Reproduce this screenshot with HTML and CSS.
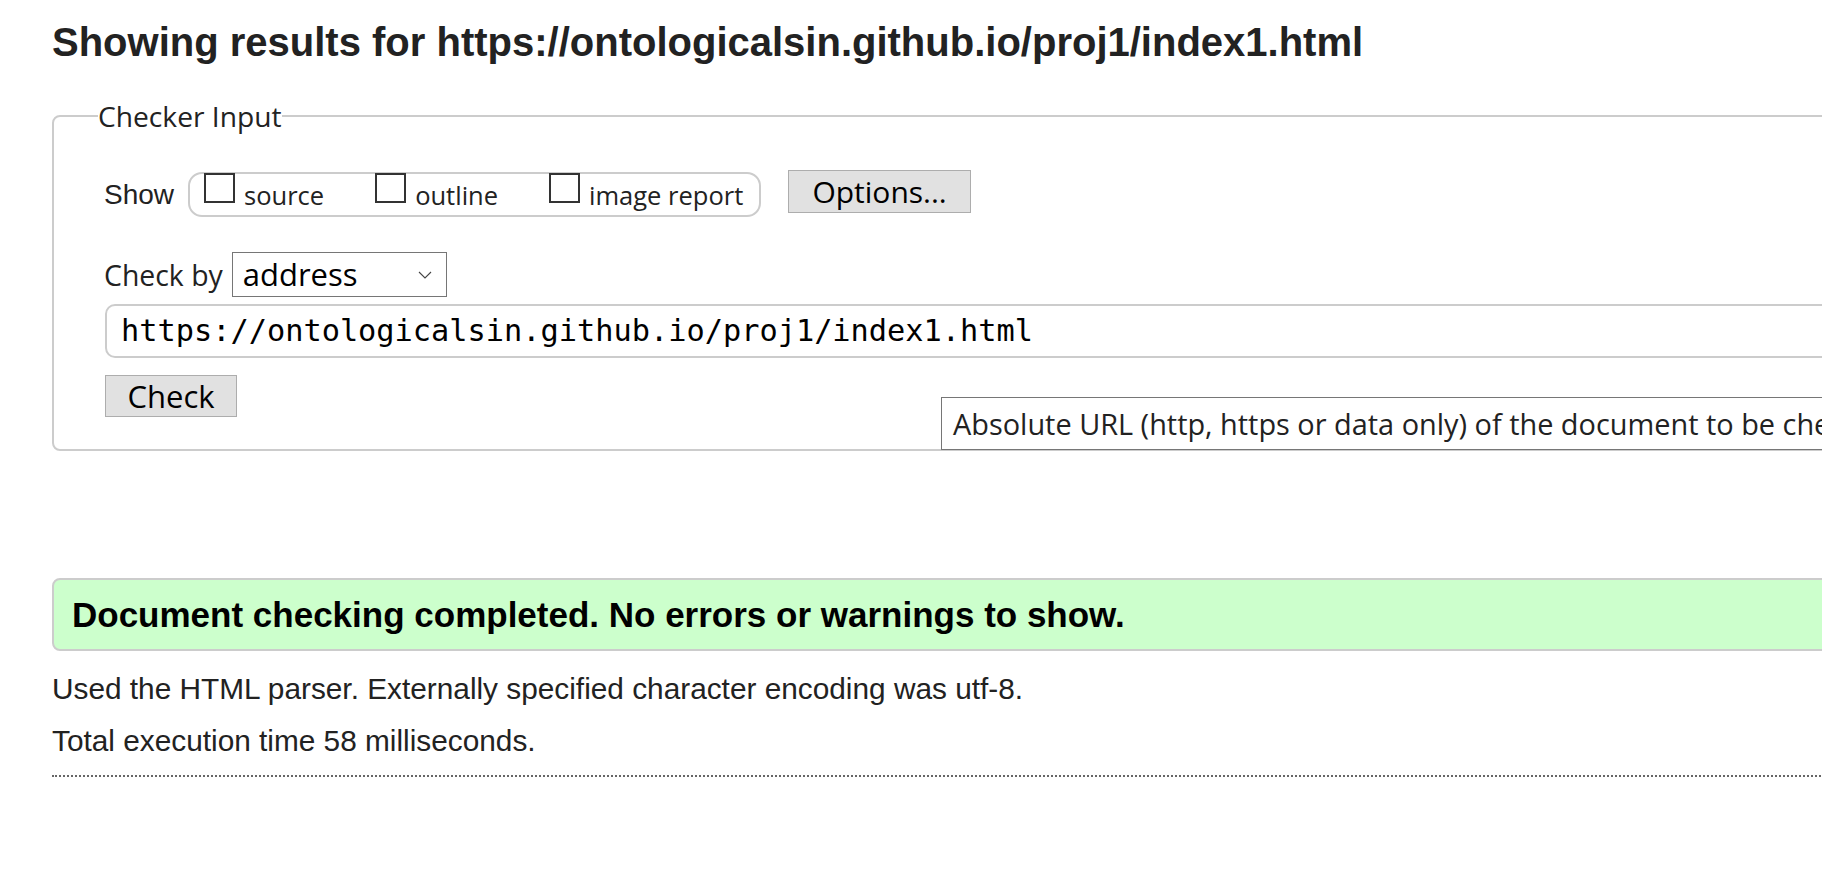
FILE: index.html
```html
<!DOCTYPE html>
<html lang="en">
<head>
<meta charset="utf-8">
<title>Showing results for https://ontologicalsin.github.io/proj1/index1.html</title>
<link rel="stylesheet" href="styles.css">
</head>
<body>
<div class="page">
  <h1 class="title">Showing results for https://ontologicalsin.github.io/proj1/index1.html</h1>
  <form class="checker">
    <fieldset class="checker-input">
      <legend class="legend">Checker Input</legend>
      <div class="show-row">
        <span class="show-label">Show</span>
        <fieldset class="show-options">
          <label class="opt"><span class="box"></span><span class="opt-text">source</span></label>
          <label class="opt"><span class="box"></span><span class="opt-text">outline</span></label>
          <label class="opt"><span class="box"></span><span class="opt-text">image report</span></label>
        </fieldset>
        <button type="button" class="btn btn-options">Options...</button>
      </div>
      <div class="by-row">
        <span class="by-label">Check by</span>
        <div class="select">
          <span class="select-value">address</span>
          <svg class="chevron" width="14" height="8" viewBox="0 0 14 8"><polyline points="1,1 7,7 13,1" fill="none" stroke="#444" stroke-width="1.1"/></svg>
        </div>
      </div>
      <div class="url-input">https://ontologicalsin.github.io/proj1/index1.html</div>
      <div class="check-row">
        <button type="button" class="btn btn-check">Check</button>
      </div>
    </fieldset>
  </form>
  <div class="tooltip">Absolute URL (http, https or data only) of the document to be checked. Tip: you can also just paste the address into the field.</div>
  <div class="success"><span class="success-text">Document checking completed. No errors or warnings to show.</span></div>
  <p class="details">Used the HTML parser. Externally specified character encoding was utf-8.</p>
  <p class="details details-time">Total execution time 58 milliseconds.</p>
  <div class="dotted"></div>
</div>
</body>
</html>
```

FILE: styles.css
```css
html {
  overflow: hidden;
  background: #fff;
}

body {
  margin: 0;
  font-family: "Liberation Sans", Arial, sans-serif;
  color: #222;
}

.page {
  position: relative;
  width: 2400px;
  padding-left: 52px;
  padding-top: 20px;
}

.title {
  margin: 0 0 32px 0;
  font-size: 40px;
  line-height: 45px;
  font-weight: bold;
  color: #222;
}

.checker {
  margin: 0;
}

.checker-input {
  margin: 0;
  padding: 35px 0 32px 51px;
  border: 2px solid #ccc;
  border-radius: 8px;
  min-inline-size: 0;
}

.legend {
  margin-left: -7px;
  padding: 0;
  font-family: "Open Sans", sans-serif;
  font-size: 28.2px;
  line-height: 38px;
  color: #222;
}

.show-row {
  display: flex;
  align-items: flex-start;
  height: 47px;
}

.show-label {
  margin-top: 9px;
  margin-left: -1px;
  font-size: 28px;
  line-height: 32px;
  color: #222;
}

.show-options {
  display: flex;
  align-items: flex-start;
  box-sizing: border-box;
  width: 573px;
  height: 45px;
  margin: 2px 0 0 14px;
  padding: 0 0 0 14px;
  border: 2px solid #ccc;
  border-radius: 14px;
  min-inline-size: 0;
}

.opt {
  display: flex;
  align-items: flex-start;
  margin-right: 51px;
}

.opt:last-child {
  margin-right: 0;
}

.box {
  box-sizing: border-box;
  width: 31px;
  height: 30px;
  margin-top: -1px;
  border: 2px solid #333;
  background: #fff;
}

.opt-text {
  margin: 5px 0 0 9px;
  font-family: "Open Sans", sans-serif;
  font-size: 25.5px;
  line-height: 32px;
  color: #222;
}

.btn {
  box-sizing: border-box;
  padding: 0;
  background: #e1e1e1;
  border: 1px solid #adadad;
  border-radius: 0;
  color: #000;
  font-family: "Open Sans", sans-serif;
}

.btn-options {
  width: 183px;
  height: 43px;
  margin-left: 27px;
  font-size: 30px;
  line-height: 41px;
}

.by-row {
  display: flex;
  align-items: center;
  margin-top: 35px;
  height: 45px;
}

.by-label {
  margin-left: -1px;
  font-family: "Open Sans", sans-serif;
  font-size: 28.4px;
  line-height: 38px;
  color: #222;
}

.select {
  box-sizing: border-box;
  display: flex;
  align-items: center;
  justify-content: space-between;
  width: 215px;
  height: 45px;
  margin-left: 9px;
  padding: 0 14px 0 10px;
  border: 1px solid #767676;
  background: #fff;
}

.select-value {
  font-family: "Open Sans", sans-serif;
  font-size: 31px;
  line-height: 43px;
  color: #000;
}

.chevron {
  display: block;
}

.url-input {
  box-sizing: border-box;
  height: 54px;
  margin-top: 7px;
  padding-left: 14px;
  border: 2px solid #ccc;
  border-radius: 10px;
  font-family: "DejaVu Sans Mono", "Liberation Mono", monospace;
  font-size: 30.3px;
  line-height: 50px;
  color: #000;
  white-space: nowrap;
}

.check-row {
  margin-top: 17px;
  display: flex;
}

.btn-check {
  width: 132px;
  height: 42px;
  font-size: 31px;
  line-height: 40px;
}

.tooltip {
  position: absolute;
  left: 941px;
  top: 397px;
  box-sizing: border-box;
  height: 53px;
  padding: 0 10px 0 11px;
  border: 1px solid #767676;
  background: #fff;
  font-family: "Open Sans", sans-serif;
  font-size: 28.9px;
  line-height: 51px;
  color: #222;
  white-space: nowrap;
}

.success {
  box-sizing: border-box;
  height: 73px;
  margin-top: 127px;
  padding-left: 18px;
  display: flex;
  align-items: center;
  background: #ccffcc;
  border: 2px solid #ccc;
  border-radius: 8px;
}

.success-text {
  font-size: 35px;
  font-weight: bold;
  color: #000;
}

.details {
  margin: 21px 0 0 0;
  font-size: 29.8px;
  line-height: 34px;
  color: #222;
}

.details-time {
  margin-top: 18px;
}

.dotted {
  margin-top: 17px;
  border-top: 2px dotted #666;
}
```
